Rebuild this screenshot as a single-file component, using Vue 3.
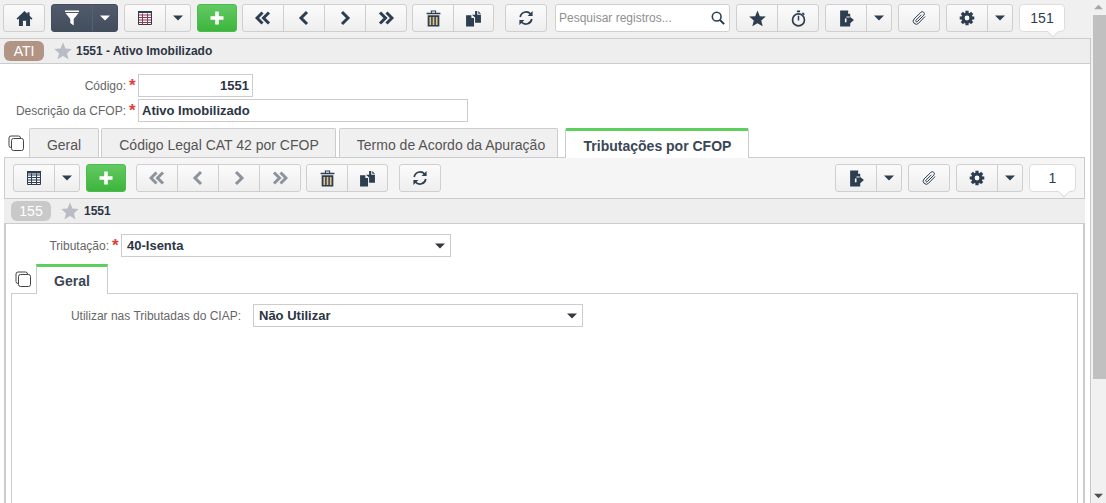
<script setup>
const topLeft = [
  { cls: '', items: [{ i: 'home', w: 'w40' }] },
  { cls: 'm6 dark', items: [{ i: 'filter', w: 'w40' }, { i: 'caret', w: 'w25' }] },
  { cls: 'm6', items: [{ i: 'gridr', w: 'w40' }, { i: 'caret', w: 'w25' }] },
  { cls: 'm6 green', items: [{ i: 'plus', w: 'w38' }] },
  { cls: 'm5', items: [{ i: 'dleft', w: 'w40' }, { i: 'left', w: 'w41' }, { i: 'right', w: 'w41' }, { i: 'dright', w: 'w41' }] },
  { cls: 'm5', items: [{ i: 'trash', w: 'w40' }, { i: 'paste', w: 'w40' }] },
  { cls: 'm11', items: [{ i: 'refresh', w: 'w40' }] }
]
const topRight = [
  { cls: 'm6', items: [{ i: 'star', w: 'w40' }, { i: 'watch', w: 'w41' }] },
  { cls: 'm6', items: [{ i: 'export', w: 'w40' }, { i: 'caret', w: 'w25' }] },
  { cls: 'm6', items: [{ i: 'clip', w: 'w40' }] },
  { cls: 'm6', items: [{ i: 'gear', w: 'w40' }, { i: 'caret', w: 'w25' }] }
]
const subLeft = [
  { cls: '', items: [{ i: 'grid', w: 'w40' }, { i: 'caret', w: 'w25' }] },
  { cls: 'm6 green', items: [{ i: 'plus', w: 'w38' }] },
  { cls: 'm10 off', items: [{ i: 'dleft', w: 'w40' }, { i: 'left', w: 'w41' }, { i: 'right', w: 'w41' }, { i: 'dright', w: 'w41' }] },
  { cls: 'm5', items: [{ i: 'trash', w: 'w40' }, { i: 'paste', w: 'w40' }] },
  { cls: 'm11', items: [{ i: 'refresh', w: 'w40' }] }
]
const subRight = [
  { cls: '', items: [{ i: 'export', w: 'w40' }, { i: 'caret', w: 'w25' }] },
  { cls: 'm6', items: [{ i: 'clip', w: 'w40' }] },
  { cls: 'm6', items: [{ i: 'gear', w: 'w40' }, { i: 'caret', w: 'w25' }] }
]
const tabs = [
  { t: 'Geral', cls: 't1' },
  { t: 'Código Legal CAT 42 por CFOP', cls: 't2' },
  { t: 'Termo de Acordo da Apuração', cls: 't3' },
  { t: 'Tributações por CFOP', cls: 't4 active' }
]
</script>

<template>
  <div class="page">
    <svg class="sprite" aria-hidden="true">
      <symbol id="home" viewBox="0 0 16 16"><path d="M8 1 0.5 8 1.6 9.1 2.8 8V15H6.5V10.2H9.5V15H13.2V8L14.4 9.1 15.5 8 12.8 5.5V2H10.8V3.6Z" /></symbol>
      <symbol id="filter" viewBox="0 0 16 16"><path d="M1 .5H15V2H1ZM1.5 3H14.5L9.7 9V15.5L6.3 13V9Z" /></symbol>
      <symbol id="grid" viewBox="0 0 16 16"><path d="M1.5 1.5H14.5V14.5H1.5ZM1.5 5H14.5M1.5 7.5H14.5M1.5 10H14.5M1.5 12.5H14.5M5.5 3.5V14.5M10.5 3.5V14.5" fill="none" stroke="currentColor" stroke-width="1" /><path d="M1 1H15V3.5H1Z" /></symbol>
      <symbol id="gridr" viewBox="0 0 16 16"><path d="M1.5 5H14.5M1.5 7.5H14.5M1.5 10H14.5M1.5 12.5H14.5M5.5 3.5V14.5M10.5 3.5V14.5" fill="none" stroke="#8f3a4e" stroke-width="1" /><path d="M1.5 1.5H14.5V14.5H1.5Z" fill="none" stroke="currentColor" stroke-width="1" /><path d="M1 1H15V3H1Z" /></symbol>
      <symbol id="plus" viewBox="0 0 16 16"><path d="M6.2 1.5H9.8V6.2H14.5V9.8H9.8V14.5H6.2V9.8H1.5V6.2H6.2Z" /></symbol>
      <symbol id="dleft" viewBox="0 0 16 16"><path d="M7.5 2.5 2 8 7.5 13.5M14 2.5 8.5 8 14 13.5" fill="none" stroke="currentColor" stroke-width="3" /></symbol>
      <symbol id="dright" viewBox="0 0 16 16"><path d="M2 2.5 7.5 8 2 13.5M8.5 2.5 14 8 8.5 13.5" fill="none" stroke="currentColor" stroke-width="3" /></symbol>
      <symbol id="left" viewBox="0 0 16 16"><path d="M11 2 5 8 11 14" fill="none" stroke="currentColor" stroke-width="3" /></symbol>
      <symbol id="right" viewBox="0 0 16 16"><path d="M5 2 11 8 5 14" fill="none" stroke="currentColor" stroke-width="3" /></symbol>
      <symbol id="trash" viewBox="0 0 16 16"><path d="M5.5 2.5V.5H10.5V2.5H14.5V4H1.5V2.5ZM6.5 1.5V2.5H9.5V1.5ZM2.5 5H13.5V15.5H2.5Z" /><path d="M5 6.5V14M8 6.5V14M11 6.5V14" stroke="#e2c48c" stroke-width="1.6" /></symbol>
      <symbol id="paste" viewBox="0 0 16 16"><path d="M1 5H6V7.5H8.5V15.5H1ZM9.5 1H11.5V4.5H15V12H9.5V7L6.5 4.5H9.5Z" /><path d="M12.5 1 15 3.5H12.5Z" /></symbol>
      <symbol id="refresh" viewBox="0 0 16 16"><path d="M2.2 7A6 6 0 0 1 12.6 4M13.8 9A6 6 0 0 1 3.4 12" fill="none" stroke="currentColor" stroke-width="1.7" /><path d="M14.6 1V6H9.6ZM1.4 15V10H6.4Z" /></symbol>
      <symbol id="search" viewBox="0 0 16 16"><circle cx="6.5" cy="6.5" r="5" fill="none" stroke="currentColor" stroke-width="1.8" /><path d="M10 10 15 15" fill="none" stroke="currentColor" stroke-width="2.4" /></symbol>
      <symbol id="star" viewBox="0 0 16 16"><path d="M8 .5 10.2 5.8 15.8 6.2 11.5 9.9 12.9 15.4 8 12.4 3.1 15.4 4.5 9.9 .2 6.2 5.8 5.8Z" /></symbol>
      <symbol id="watch" viewBox="0 0 16 16"><circle cx="8" cy="9.3" r="5.6" fill="none" stroke="currentColor" stroke-width="1.6" /><path d="M6.5 .5H9.5V2.2H6.5ZM7.3 5.5H8.7V9.8H7.3ZM12.2 2.2 14 4 13 5 11.2 3.2Z" /></symbol>
      <symbol id="export" viewBox="0 0 16 16"><path d="M2 .5H9.5L11.5 3.5V6.5L15 9.5 11.5 12.5V15.5H2Z" /><path d="M6.5 8H8V11.5H6.5ZM8 6H11V7H8ZM9.5 .8V3.6H12Z" fill="#fff" /></symbol>
      <symbol id="clip" viewBox="0 0 16 16"><path d="M14 6.5 7.6 13.2A3 3 0 0 1 3 9L9.8 2.4A2 2 0 0 1 12.8 5.2L6.4 11.6A.9.9 0 0 1 5 10.2L10.4 4.8" fill="none" stroke="currentColor" stroke-width="1" /></symbol>
      <symbol id="gear" viewBox="0 0 16 16"><circle cx="8" cy="8" r="5.6" /><path d="M6.4 .7H9.6V15.3H6.4ZM.7 6.4H15.3V9.6H.7Z" /><path d="M6.4 .7H9.6V15.3H6.4Z" transform="rotate(45 8 8)" /><path d="M6.4 .7H9.6V15.3H6.4Z" transform="rotate(-45 8 8)" /><circle cx="8" cy="8" r="2.4" fill="#fff" /></symbol>
      <symbol id="caret" viewBox="0 0 10 6"><path d="M0 .5H10L5 5.5Z" /></symbol>
      <symbol id="copy" viewBox="0 0 16 16"><path d="M3.5 12.5H3A2 2 0 0 1 1 10.5V3A2 2 0 0 1 3 1H10.5A2 2 0 0 1 12.5 3V3.5" fill="none" stroke="currentColor" /><rect x="3.5" y="3.5" width="12" height="12" rx="2" fill="#fff" stroke="currentColor" /></symbol>
    </svg>

    <div class="toolbar top">
      <div v-for="(g, n) in topLeft" :key="n" class="group" :class="g.cls">
        <span v-for="b in g.items" :key="b.i" class="btn" :class="[b.w, 'ic-' + b.i]"><svg><use :href="'#' + b.i" /></svg></span>
      </div>
      <div class="search">
        <span>Pesquisar registros...</span>
        <svg><use href="#search" /></svg>
      </div>
      <div v-for="(g, n) in topRight" :key="'r' + n" class="group" :class="g.cls">
        <span v-for="b in g.items" :key="b.i" class="btn" :class="[b.w, 'ic-' + b.i]"><svg><use :href="'#' + b.i" /></svg></span>
      </div>
      <div class="counter c46 m6">151</div>
    </div>

    <div class="content">
      <div class="rec-head">
        <span class="badge ati">ATI</span>
        <svg class="fav"><use href="#star" /></svg>
        <span class="rec-title">1551 - Ativo Imobilizado</span>
      </div>

      <div class="form">
        <div class="row">
          <label class="lbl l1">Código:</label><span class="req">*</span>
          <div class="field short num">1551</div>
        </div>
        <div class="row">
          <label class="lbl l1">Descrição da CFOP:</label><span class="req">*</span>
          <div class="field wide">Ativo Imobilizado</div>
        </div>
      </div>

      <div class="tabbar">
        <svg class="copy"><use href="#copy" /></svg>
        <div v-for="t in tabs" :key="t.t" class="tab" :class="t.cls">{{ t.t }}</div>
      </div>

      <div class="panel">
        <div class="toolbar sub">
          <div v-for="(g, n) in subLeft" :key="n" class="group" :class="g.cls">
            <span v-for="b in g.items" :key="b.i" class="btn" :class="[b.w, 'ic-' + b.i]"><svg><use :href="'#' + b.i" /></svg></span>
          </div>
          <div class="spacer"></div>
          <div v-for="(g, n) in subRight" :key="'r' + n" class="group" :class="g.cls">
            <span v-for="b in g.items" :key="b.i" class="btn" :class="[b.w, 'ic-' + b.i]"><svg><use :href="'#' + b.i" /></svg></span>
          </div>
          <div class="counter c47 m6">1</div>
        </div>

        <div class="panel-body">
          <div class="rec-head inner">
            <span class="badge num155">155</span>
            <svg class="fav"><use href="#star" /></svg>
            <span class="rec-title">1551</span>
          </div>

          <div class="row trib">
            <label class="lbl l2">Tributação:</label><span class="req">*</span>
            <div class="field wide sel">40-Isenta<svg class="dd"><use href="#caret" /></svg></div>
          </div>

          <div class="subtabs">
            <svg class="copy"><use href="#copy" /></svg>
            <div class="subtab">Geral</div>
          </div>

          <div class="inner-panel">
            <div class="row">
              <label class="lbl l3">Utilizar nas Tributadas do CIAP:</label>
              <div class="field wide sel">Não Utilizar<svg class="dd"><use href="#caret" /></svg></div>
            </div>
          </div>
        </div>
      </div>
    </div>

    <div class="scrollbar">
      <svg class="arrow up"><use href="#caret" /></svg>
      <div class="thumb"></div>
      <svg class="arrow down"><use href="#caret" /></svg>
    </div>
  </div>
</template>

<style>
html, body { margin: 0; background: #fff; overflow: hidden; }
</style>

<style scoped>
.page {
  position: relative;
  width: 1106px;
  height: 503px;
  overflow: hidden;
  font-family: "Liberation Sans", Arial, sans-serif;
  font-size: 12px;
  color: #2c3e50;
  background: #fff;
}
.sprite { position: absolute; width: 0; height: 0; }

.toolbar { display: flex; box-sizing: border-box; }
.toolbar.top {
  width: 1091px;
  height: 38px;
  padding: 4px 0 0 3px;
  background: #f0f0f0;
}
.toolbar.sub {
  height: 41px;
  padding: 6px 8px 0;
  background: #f5f5f5;
  border: 1px solid #ccc;
  border-bottom: 0;
}
.spacer { flex: 1; }

.group {
  display: flex;
  height: 26px;
  border: 1px solid #cfcfcf;
  border-radius: 3px;
  background: linear-gradient(#fbfbfb, #eeeeee);
  color: #2c3e50;
}
.m5 { margin-left: 5px; }
.m6 { margin-left: 6px; }
.m10 { margin-left: 10px; }
.m11 { margin-left: 11px; }

.btn {
  display: flex;
  align-items: center;
  justify-content: center;
  box-sizing: border-box;
  height: 26px;
}
.btn + .btn { border-left: 1px solid #cfcfcf; }
.btn svg { width: 16px; height: 16px; fill: currentColor; }
.w25 { width: 25px; }
.w38 { width: 38px; }
.w40 { width: 40px; }
.w41 { width: 41px; }
.btn.ic-caret svg { width: 10px; height: 6px; }
.btn.ic-trash svg,
.btn.ic-paste svg,
.btn.ic-star svg,
.btn.ic-watch svg,
.btn.ic-export svg,
.btn.ic-home svg { width: 17px; height: 17px; }

.group.dark {
  background: linear-gradient(#505a6a, #434e5d);
  border-color: #444f5e;
  color: #fff;
}
.group.dark .btn + .btn { border-left-color: #566070; }
.group.green {
  background: linear-gradient(#62c962, #3db53d);
  border-color: #4cbb4c;
  color: #fff;
}
.group.off { color: #8b939c; }

.search {
  display: flex;
  align-items: center;
  justify-content: space-between;
  box-sizing: border-box;
  width: 175px;
  height: 28px;
  margin-left: 8px;
  padding: 0 2px 0 3px;
  background: #fff;
  border: 1px solid #cfcfcf;
  border-radius: 3px;
  color: #8f8f8f;
  font-size: 12px;
}
.search svg { width: 14px; height: 14px; margin-right: 2px; fill: #2c3e50; color: #2c3e50; }

.counter {
  position: relative;
  box-sizing: border-box;
  height: 28px;
  line-height: 26px;
  text-align: center;
  font-size: 14px;
  color: #2c3e50;
  background: #fff;
  border: 1px solid #ddd;
  border-radius: 4px;
}
.counter::after {
  content: "";
  position: absolute;
  right: 7px;
  bottom: -5px;
  width: 7px;
  height: 7px;
  background: #fff;
  border-right: 1px solid #ddd;
  border-bottom: 1px solid #ddd;
  transform: rotate(45deg);
}
.c46 { width: 46px; }
.c47 { width: 47px; }

.content {
  box-sizing: border-box;
  width: 1091px;
  height: 465px;
  border-right: 1px solid #c8c8c8;
}

.rec-head {
  display: flex;
  align-items: center;
  box-sizing: border-box;
  height: 26px;
  padding-left: 4px;
  background: #eeeeee;
  border-top: 1px solid #ccc;
  border-bottom: 1px solid #ccc;
}
.badge {
  box-sizing: border-box;
  width: 40px;
  height: 20px;
  line-height: 20px;
  text-align: center;
  border-radius: 6px;
  color: #fff;
  font-size: 14px;
}
.ati { background: #b29485; }
.num155 { background: #c9c9c9; }
.fav { width: 18px; height: 18px; margin-left: 10px; fill: #b9bcc5; }
.rec-title { margin-left: 4px; font-weight: bold; font-size: 12px; color: #2c3545; }
.rec-head.inner .fav { margin-left: 10px; }
.rec-head.inner .rec-title { margin-left: 5px; }

.form { padding-top: 10px; display: flex; flex-direction: column; gap: 2px; }
.row { display: flex; align-items: center; height: 23px; }
.lbl { text-align: right; color: #666; font-size: 12px; }
.l1 { width: 126px; }
.l2 { width: 103px; }
.l3 { width: 219px; margin-right: 12px; }
.req {
  width: 12px;
  padding-left: 3px;
  box-sizing: border-box;
  color: #e0403a;
  font-size: 17px;
  line-height: 18px;
  font-weight: bold;
  height: 18px;
}
.field {
  position: relative;
  box-sizing: border-box;
  height: 23px;
  line-height: 21px;
  padding: 0 3px;
  background: #fff;
  border: 1px solid #ccc;
  font-size: 13px;
  font-weight: bold;
  color: #2c3545;
}
.short { width: 115px; }
.wide { width: 330px; }
.num { text-align: right; }
.sel { padding-left: 5px; }
.dd { position: absolute; right: 5px; top: 8px; width: 10px; height: 6px; fill: #33393f; }

.tabbar {
  display: flex;
  align-items: flex-end;
  height: 35px;
  padding-left: 8px;
}
.copy { width: 16px; height: 16px; color: #444; fill: none; flex: none; }
.tabbar .copy { align-self: flex-start; margin-top: 13px; margin-right: 5px; }
.tab {
  box-sizing: border-box;
  height: 29px;
  line-height: 33px;
  text-align: center;
  font-size: 14px;
  color: #555;
  background: #f1f0f0;
  border: 1px solid #ccc;
  border-bottom: 0;
  border-radius: 2px 2px 0 0;
}
.t1 { width: 70px; }
.t2 { width: 235px; margin-left: 2px; padding-left: 1px; }
.t3 { width: 219px; margin-left: 3px; padding-left: 5px; }
.t4 { width: 184px; margin-left: 7px; padding-left: 1px; }
.tab.active {
  position: relative;
  height: 30px;
  margin-bottom: -1px;
  line-height: 30px;
  border-top: 3px solid #5ccf5c;
  background: #fff;
  font-weight: bold;
  color: #3a4656;
  z-index: 1;
}

.panel { margin-left: 4px; width: 1081px; }
.panel-body {
  box-sizing: border-box;
  height: 306px;
  border-left: 2px solid #ccc;
  border-right: 2px solid #ccc;
}
.panel-body .rec-head.inner { margin: 0 -2px; padding-left: 7px; }
.trib { margin-top: 10px; }
.subtabs {
  display: flex;
  height: 30px;
  margin-top: 7px;
  padding-left: 9px;
}
.subtabs .copy { margin-top: 7px; margin-right: 5px; }
.subtab {
  position: relative;
  box-sizing: border-box;
  width: 72px;
  height: 30px;
  line-height: 28px;
  text-align: center;
  font-size: 14px;
  font-weight: bold;
  color: #3a4656;
  background: #fff;
  border: 1px solid #ccc;
  border-top: 3px solid #5ccf5c;
  border-bottom: 0;
  z-index: 1;
}
.inner-panel {
  box-sizing: border-box;
  height: 220px;
  margin: -1px 0 0 5px;
  width: 1067px;
  padding-top: 10px;
  border: 1px solid #ccc;
  border-bottom: 0;
}
.inner-panel .row { padding-left: 10px; }

.scrollbar {
  position: absolute;
  left: 1091px;
  top: 0;
  width: 15px;
  height: 503px;
  background: #f1f1f1;
}
.thumb {
  position: absolute;
  left: 2px;
  top: 15px;
  width: 13px;
  height: 364px;
  background: #c0c0c0;
}
.arrow { position: absolute; left: 3px; width: 9px; height: 6px; fill: #a8a8a8; }
.arrow.up { top: 4px; transform: rotate(180deg); }
.arrow.down { bottom: 4px; fill: #505050; }
</style>
